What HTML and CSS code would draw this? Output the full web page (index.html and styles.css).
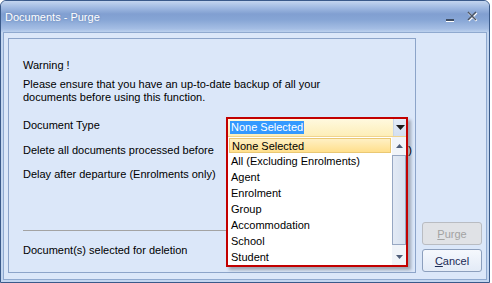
FILE: index.html
```html
<!DOCTYPE html>
<html lang="en">
<head>
    <meta charset="UTF-8">
    <meta name="viewport" content="width=device-width, initial-scale=1.0">
    <title>Documents - Purge</title>
    <link rel="stylesheet" href="styles.css">
</head>
<body>
    <div class="window">
        <div class="titlebar">
            <span class="title">Documents - Purge</span>
            <div class="controls">
                <svg class="ctl-min" width="10" height="6" viewBox="0 0 10 6">
                    <rect x="1" y="1" width="8" height="2" fill="#3f4d63"/>
                    <rect x="1" y="3" width="8" height="1" fill="#ffffff"/>
                </svg>
                <svg class="ctl-close" width="13" height="12" viewBox="0 0 13 12">
                    <path d="M2 2 L10 10 M10 2 L2 10" stroke="#ffffff" stroke-width="2.2" transform="translate(0.6 0.8)"/>
                    <path d="M2 2 L10 10 M10 2 L2 10" stroke="#4a5568" stroke-width="1.6"/>
                </svg>
            </div>
        </div>

        <div class="client">
            <div class="panel">
                <p class="warning">Warning !</p>
                <p class="notice">Please ensure that you have an up-to-date backup of all your<br>documents before using this function.</p>

                <div class="field first">Document Type</div>
                <div class="field second">
                    <span>Delete all documents processed before</span>
                    <span class="tail">)</span>
                </div>
                <div class="field">Delay after departure (Enrolments only)</div>

                <div class="spacer"></div>
                <div class="rule"></div>
                <div class="field summary">Document(s) selected for deletion</div>

                <!-- open dropdown of the Document Type combo -->
                <div class="combo-popup">
                    <div class="combo">
                        <span class="combo-value"><span class="sel">None Selected</span></span>
                        <span class="combo-btn">
                            <svg width="9" height="5" viewBox="0 0 9 5"><path d="M0 0 H9 L4.5 5 Z" fill="#1b1b1b"/></svg>
                        </span>
                    </div>
                    <div class="list">
                        <ul class="items">
                            <li class="item current">None Selected</li>
                            <li class="item">All (Excluding Enrolments)</li>
                            <li class="item">Agent</li>
                            <li class="item">Enrolment</li>
                            <li class="item">Group</li>
                            <li class="item">Accommodation</li>
                            <li class="item">School</li>
                            <li class="item">Student</li>
                        </ul>
                        <div class="scrollbar">
                            <span class="arrow">
                                <svg width="7" height="4" viewBox="0 0 7 4"><path d="M0 4 H7 L3.5 0 Z" fill="#4e5d78"/></svg>
                            </span>
                            <span class="thumb"></span>
                            <span class="arrow">
                                <svg width="7" height="4" viewBox="0 0 7 4"><path d="M0 0 H7 L3.5 4 Z" fill="#4e5d78"/></svg>
                            </span>
                        </div>
                    </div>
                </div>
            </div>

            <div class="actions">
                <button class="btn" disabled><u>P</u>urge</button>
                <button class="btn"><u>C</u>ancel</button>
            </div>
        </div>
    </div>
</body>
</html>
```

FILE: styles.css
```css
* {
    margin: 0;
    padding: 0;
    box-sizing: border-box;
    font-family: 'Liberation Sans', Arial, sans-serif;
}

body {
    background-color: #ffffff;
    font-size: 11px;
    color: #000000;
}

.window {
    width: 490px;
    height: 283px;
    display: flex;
    flex-direction: column;
    background-color: #c3d6f0;
    border: 1px solid #3a5a8a;
    border-radius: 6px 6px 0 0;
    padding: 0 2px 2px;
    overflow: hidden;
}

.titlebar {
    height: 31px;
    margin: 0 -2px;
    display: flex;
    align-items: center;
    justify-content: space-between;
    padding: 0 10px 0 4px;
    background: linear-gradient(#c3d5ef 0%, #9fb9e1 22%, #819fd1 42%, #86a5d5 60%, #a5bee4 90%, #bcd1ee 100%);
    border-radius: 5px 5px 0 0;
}

.title {
    color: #ffffff;
    font-size: 11px;
    line-height: 13px;
    margin-top: 2px;
    text-shadow: 0 0 2px rgba(40, 70, 120, 0.35);
}

.controls {
    display: flex;
    align-items: center;
    gap: 11px;
}

.ctl-min {
    margin-top: 9px;
}

.ctl-close {
    margin-top: -1px;
}

.client {
    flex: 1;
    display: flex;
    align-items: flex-end;
    padding: 5px 4px 6px;
    background-color: #dbe7f9;
    border: 1px solid #8fa9cf;
}

.panel {
    position: relative;
    width: 409px;
    height: 235px;
    display: flex;
    flex-direction: column;
    padding: 20px 14px 15px;
    border: 1px solid #8ca4c9;
}

.warning,
.notice,
.field {
    line-height: 13px;
}

.notice {
    margin-top: 6px;
}

.field {
    margin-top: 11px;
    display: flex;
    justify-content: space-between;
}

.field.first {
    margin-top: 15px;
}

.field.second {
    margin-top: 12px;
}

.tail {
    margin-right: -11px;
}

.spacer {
    flex: 1;
}

.rule {
    border-top: 1px solid #a3a3a3;
    margin-right: 2px;
}

.field.summary {
    margin-top: 13px;
}

/* dropdown list */
.combo-popup {
    position: absolute;
    left: 217px;
    top: 78px;
    width: 182px;
    height: 150px;
    border: 2px solid #c20000;
    background-color: #ffffff;
    box-shadow: 3px 3px 3px rgba(0, 0, 0, 0.28);
    display: flex;
    flex-direction: column;
}

.combo {
    height: 18px;
    display: flex;
    background: linear-gradient(#fff9df, #fdeeb8);
    border-bottom: 1px solid #f0d48e;
}

.combo-value {
    flex: 1;
    padding: 2px 0 0 2px;
    white-space: nowrap;
}

.sel {
    display: inline-block;
    height: 13px;
    line-height: 13px;
    padding: 0 1px;
    color: #ffffff;
    background-color: #3399ff;
}

.combo-btn {
    width: 13px;
    display: flex;
    align-items: center;
    justify-content: center;
    background: linear-gradient(#e4ecf7, #d3dff0);
    border-left: 1px solid #c9d6e8;
}

.list {
    flex: 1;
    display: flex;
}

.items {
    flex: 1;
    list-style: none;
}

.item {
    height: 16px;
    line-height: 16px;
    padding-left: 3px;
}

.item.current {
    line-height: 14px;
    margin: 1px 1px 0 1px;
    height: 15px;
    padding-left: 2px;
    background: linear-gradient(#fff0c4, #ffdf8c);
    border: 1px solid #eac873;
}

.scrollbar {
    width: 14px;
    display: flex;
    flex-direction: column;
    align-items: center;
    background-color: #f1f4f9;
}

.arrow {
    height: 17px;
    display: flex;
    align-items: center;
    justify-content: center;
}

.thumb {
    flex: 1;
    width: 14px;
    margin: 1px 0 3px;
    border: 1px solid #97a7c2;
    background: linear-gradient(90deg, #e3eaf5, #d6e0ef);
}

/* buttons */
.actions {
    display: flex;
    flex-direction: column;
    gap: 4px;
    margin-left: 6px;
    margin-bottom: 1px;
}

.btn {
    width: 60px;
    height: 23px;
    font-size: 11px;
    border-radius: 3px;
    color: #1a2a55;
    background: linear-gradient(#f5f8fd, #e3ebf7);
    border: 1px solid #8c9fbd;
}

.btn:disabled {
    color: #a3a3a3;
    background: #e0e2e6;
    border-color: #b9bcc2;
}
```
